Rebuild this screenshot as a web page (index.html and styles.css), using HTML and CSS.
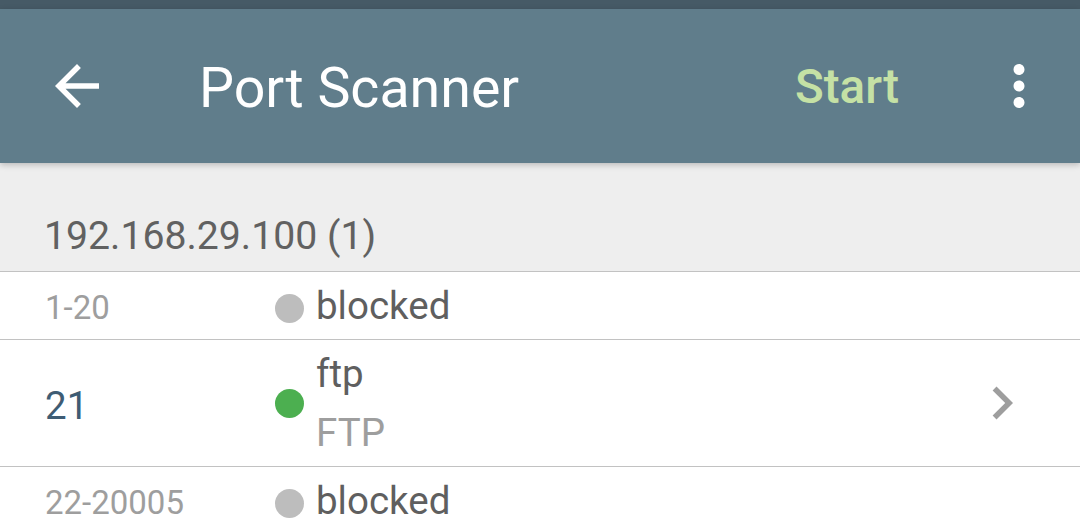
FILE: index.html
```html
<!DOCTYPE html>
<html>
<head>
<meta charset="utf-8">
<link rel="stylesheet" href="styles.css">
</head>
<body>
<div class="status"></div>
<header class="toolbar">
  <svg class="icon back" viewBox="0 0 24 24"><path d="M20 11H7.83l5.59-5.59L12 4l-8 8 8 8 1.41-1.41L7.83 13H20v-2z"/></svg>
  <div class="title">Port Scanner</div>
  <div class="start">Start</div>
  <svg class="icon more" viewBox="0 0 24 24"><path d="M12 8c1.1 0 2-.9 2-2s-.9-2-2-2-2 .9-2 2 .9 2 2 2zm0 2c-1.1 0-2 .9-2 2s.9 2 2 2 2-.9 2-2-.9-2-2-2zm0 6c-1.1 0-2 .9-2 2s.9 2 2 2 2-.9 2-2-.9-2-2-2z"/></svg>
</header>
<main class="list">
  <div class="section">192.168.29.100 (1)</div>
  <div class="row single">
    <div class="port muted">1-20</div>
    <div class="dot grey"></div>
    <div class="info"><div class="primary">blocked</div></div>
  </div>
  <div class="row double">
    <div class="port open">21</div>
    <div class="dot green"></div>
    <div class="info">
      <div class="primary">ftp</div>
      <div class="secondary">FTP</div>
    </div>
    <svg class="chev" viewBox="0 0 24 24"><path d="M10 6L8.59 7.41 13.17 12l-4.58 4.59L10 18l6-6z"/></svg>
  </div>
  <div class="row single">
    <div class="port muted">22-20005</div>
    <div class="dot grey"></div>
    <div class="info"><div class="primary">blocked</div></div>
  </div>
</main>
</body>
</html>
```

FILE: styles.css
```css
html, body {
  margin: 0;
  padding: 0;
  background: #ffffff;
  overflow: hidden;
  font-family: Roboto, "Noto Sans", sans-serif;
}

.status {
  height: 9px;
  background: #465a66;
}

.toolbar {
  position: relative;
  z-index: 1;
  height: 154px;
  background: #607d8b;
  display: flex;
  align-items: center;
  padding: 0 28px 0 44px;
  box-shadow: 0 2px 6px rgba(0, 0, 0, 0.22);
}

.icon {
  width: 66px;
  height: 66px;
  fill: #ffffff;
  flex: none;
}

.title {
  flex: 1;
  margin-left: 89px;
  margin-top: 6px;
  font-size: 55.5px;
  line-height: 64px;
  color: #ffffff;
}

.start {
  margin-right: 87px;
  margin-top: 2px;
  font-size: 47.5px;
  font-weight: 500;
  line-height: 58px;
  color: #c5e1a5;
}

.list {
  background: #ffffff;
}

.section {
  height: 96px;
  background: #eeeeee;
  border-bottom: 1px solid #c2c2c2;
  display: flex;
  align-items: flex-end;
  padding: 0 0 12px 44px;
  font-size: 39.2px;
  line-height: 45px;
  color: #616161;
}

.row {
  display: flex;
  align-items: center;
  border-bottom: 1px solid #c2c2c2;
  padding-right: 45px;
}

.row.single {
  height: 67px;
}

.row.double {
  height: 126px;
}

.port {
  width: 230px;
  padding-left: 45px;
  flex: none;
}

.port.muted {
  font-size: 33px;
  line-height: 39px;
  color: #9e9e9e;
  margin-top: 3px;
}

.port.open {
  font-size: 38.5px;
  line-height: 45px;
  color: #3e5c74;
  margin-top: 5px;
}

.dot {
  width: 29px;
  height: 29px;
  border-radius: 50%;
  flex: none;
  margin-right: 12px;
}

.single .dot {
  margin-top: 5px;
}

.dot.grey {
  background: #bdbdbd;
}

.dot.green {
  background: #4caf50;
}

.info {
  display: flex;
  flex-direction: column;
  gap: 14px;
  flex: 1;
}

.primary,
.secondary {
  font-size: 38.5px;
  line-height: 45px;
}

.primary {
  color: #5f5f5f;
}

.secondary {
  color: #9e9e9e;
}

.chev {
  width: 66px;
  height: 66px;
  fill: #9e9e9e;
  flex: none;
}
```
